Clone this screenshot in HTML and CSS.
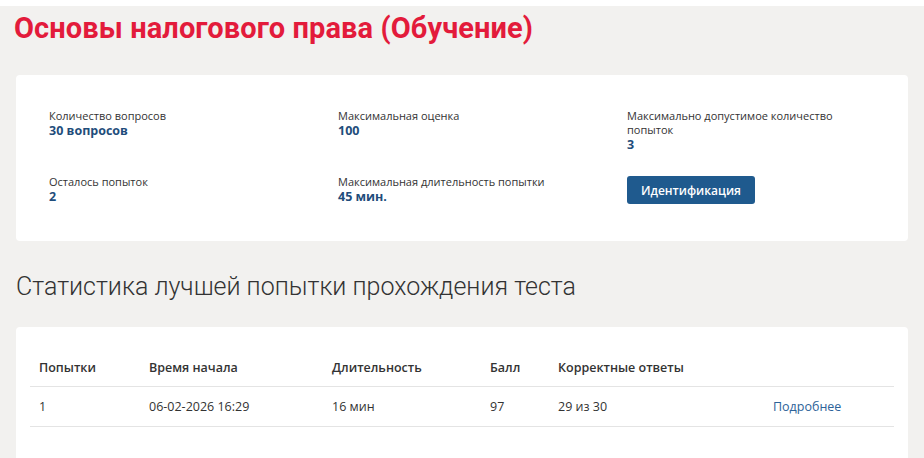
FILE: index.html
```html
<!DOCTYPE html>
<html lang="ru">
<head>
<meta charset="utf-8">
<title>Основы налогового права (Обучение)</title>
<link rel="stylesheet" href="styles.css">
</head>
<body>
<div class="page">
  <h1 class="title">Основы налогового права (Обучение)</h1>

  <section class="card info">
    <div class="info-grid">
      <div class="item">
        <div class="label">Количество вопросов</div>
        <div class="value">30 вопросов</div>
      </div>
      <div class="item">
        <div class="label">Максимальная оценка</div>
        <div class="value">100</div>
      </div>
      <div class="item narrow">
        <div class="label">Максимально допустимое количество попыток</div>
        <div class="value">3</div>
      </div>
      <div class="item">
        <div class="label">Осталось попыток</div>
        <div class="value">2</div>
      </div>
      <div class="item">
        <div class="label">Максимальная длительность попытки</div>
        <div class="value">45 мин.</div>
      </div>
      <div class="item">
        <button class="btn" type="button">Идентификация</button>
      </div>
    </div>
  </section>

  <h2 class="subtitle">Статистика лучшей попытки прохождения теста</h2>

  <section class="card stats">
    <table class="table">
      <thead>
        <tr>
          <th class="c1">Попытки</th>
          <th class="c2">Время начала</th>
          <th class="c3">Длительность</th>
          <th class="c4">Балл</th>
          <th class="c5">Корректные ответы</th>
          <th class="c6"></th>
        </tr>
      </thead>
      <tbody>
        <tr>
          <td>1</td>
          <td>06-02-2026 16:29</td>
          <td>16 мин</td>
          <td>97</td>
          <td>29 из 30</td>
          <td><a class="link" href="#">Подробнее</a></td>
        </tr>
      </tbody>
    </table>
  </section>
</div>
</body>
</html>
```

FILE: styles.css
```css
* { box-sizing: border-box; }
html, body { margin: 0; padding: 0; background: #ffffff; }
body {
  font-family: "Open Sans", "Noto Sans", sans-serif;
  color: #333333;
  overflow: hidden;
  height: 458px;
}
.page {
  margin-top: 6px;
  background: #f2f1ef;
  padding: 4px 16px 0 16px;
  min-height: 452px;
}
.title {
  margin: 0 0 0 -2px;
  font-family: "Roboto", "Open Sans", sans-serif;
  font-weight: 700;
  font-size: 29px;
  line-height: 36px;
  color: #e31b3b;
  letter-spacing: 0.1px;
}
.card {
  background: #ffffff;
  border-radius: 4px;
}
.info {
  margin-top: 29px;
  height: 166px;
  padding: 34px 0 0 33px;
}
.info-grid {
  display: grid;
  grid-template-columns: 289px 289px 240px;
  row-gap: 22px;
}
.item.narrow { max-width: 222px; }
.label {
  font-size: 11px;
  line-height: 14px;
  color: #333333;
}
.value {
  font-size: 12.5px;
  font-weight: 700;
  line-height: 16px;
  color: #1f4d7b;
}
.btn {
  margin-top: 1px;
  height: 28px;
  padding: 0 14px;
  border: none;
  border-radius: 3px;
  background: #1f5a8e;
  color: #ffffff;
  font-family: "Open Sans", sans-serif;
  font-weight: 600;
  font-size: 12px;
  cursor: pointer;
}
.subtitle {
  margin: 31px 0 0 0;
  font-family: "Roboto", "Open Sans", sans-serif;
  font-weight: 300;
  font-size: 25px;
  line-height: 30px;
  color: #333333;
}
.stats {
  margin-top: 25px;
  height: 140px;
  padding: 22px 14px 0 14px;
  border-radius: 4px 4px 0 0;
}
.table {
  width: 100%;
  border-collapse: collapse;
  font-size: 12.5px;
}
.table th {
  text-align: left;
  font-weight: 600;
  color: #333333;
  padding: 10px 9px 10px 9px;
  border-bottom: 1px solid #e4e4e4;
  line-height: 17px;
}
.table td {
  padding: 11px 9px 11px 9px;
  border-bottom: 1px solid #e4e4e4;
  line-height: 17px;
  color: #333333;
}
.c1 { width: 110px; }
.c2 { width: 183px; }
.c3 { width: 158px; }
.c4 { width: 68px; }
.c5 { width: 215px; }
.link { color: #2d6399; text-decoration: none; }
```
